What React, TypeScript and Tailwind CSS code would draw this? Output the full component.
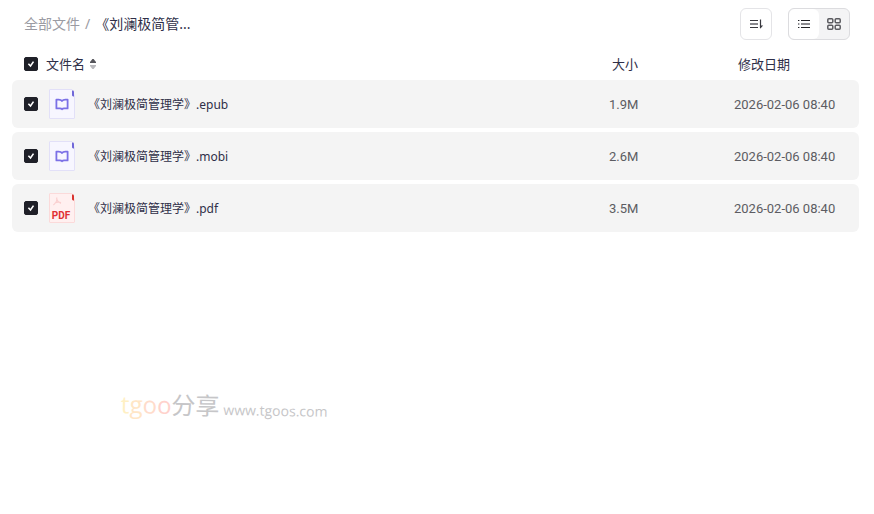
import { useState } from 'react'

type FileKind = 'book' | 'pdf'

interface FileItem {
  name: string
  ext: string
  size: string
  date: string
  kind: FileKind
}

const files: FileItem[] = [
  { name: '《刘澜极简管理学》', ext: '.epub', size: '1.9M', date: '2026-02-06 08:40', kind: 'book' },
  { name: '《刘澜极简管理学》', ext: '.mobi', size: '2.6M', date: '2026-02-06 08:40', kind: 'book' },
  { name: '《刘澜极简管理学》', ext: '.pdf', size: '3.5M', date: '2026-02-06 08:40', kind: 'pdf' },
]

function Checkbox({ label, checked, onChange }: { label: string; checked: boolean; onChange: () => void }) {
  return (
    <span className="relative block size-3.5">
      <input
        type="checkbox"
        aria-label={label}
        checked={checked}
        onChange={onChange}
        className="block size-3.5 appearance-none rounded-xs border border-[#1f2028] checked:bg-[#1f2028]"
      />
      {checked && (
        <svg viewBox="0 0 14 14" className="pointer-events-none absolute inset-0 size-3.5" fill="none" stroke="#fff" strokeWidth="1.6">
          <path d="M4.4 6.8 6.5 9 9.5 4.6" />
        </svg>
      )}
    </span>
  )
}

function BookIcon() {
  return (
    <svg viewBox="0 0 26 30" className="block h-[30px] w-[26px]" fill="none">
      <rect x=".5" y=".5" width="25" height="29" rx=".5" fill="#f7f6ff" stroke="#e2e0f8" />
      <path d="M23 0H26V7Z" fill="#f4f4f4" />
      <path d="M23 1.4H24.4L25 2.4V7.5H24L23 6.4Z" fill="#7067d8" />
      <path
        d="M13 12C12.2 10.8 11.2 10.6 9.6 10.6H7.4V19.4H11C12 19.4 12.6 19.7 13 20.2C13.4 19.7 14 19.4 15 19.4H18.6V10.6H16.4C14.8 10.6 13.8 10.8 13 12Z"
        stroke="#7b70e6"
        strokeWidth="1.8"
        strokeLinejoin="round"
      />
    </svg>
  )
}

function PdfIcon() {
  return (
    <svg viewBox="0 0 26 30" className="block h-[30px] w-[26px]" fill="none">
      <rect x=".5" y=".5" width="25" height="29" rx=".5" fill="#fff0f0" stroke="#fbdada" />
      <path d="M23 0H26V7Z" fill="#f4f4f4" />
      <path d="M23 1.4H24.4L25 2.4V7.5H24L23 6.4Z" fill="#d8332f" />
      <path d="M7.6 4.5C8.4 7 7.6 9.4 4.4 12M7.8 6.5C8.4 8.4 9.6 9.6 12 10.4M5.6 10.2C7.8 9 9.6 8.8 12 9.6" stroke="#fad0d0" strokeWidth="1.2" />
      <text x="12" y="26" textAnchor="middle" fill="#e02f33" fontSize="10" fontWeight="700" fontFamily="Roboto, sans-serif">PDF</text>
    </svg>
  )
}

function App() {
  const [selected, setSelected] = useState<boolean[]>(files.map(() => true))
  const all = selected.every(Boolean)

  const toggle = (index: number) => setSelected(selected.map((v, i) => (i === index ? !v : v)))

  return (
    <div className="min-h-screen bg-white font-['Noto_Sans','Noto_Sans_CJK_SC',sans-serif] text-[#2f2f48]">
      <header className="flex h-12 items-center justify-between px-6">
        <nav className="flex items-center text-sm">
          <a href="#all" className="text-[#9b9ba3]">全部文件</a>
          <span className="px-[5px] text-[#9b9ba3]">/</span>
          <span>《刘澜极简管...</span>
        </nav>
        <div className="flex gap-4">
          <button aria-label="排序" className="flex size-8 items-center justify-center rounded-md border border-[#e4e4e7]">
            <svg viewBox="0 0 16 16" className="size-4" fill="none" strokeWidth="1.2">
              <path d="M2 4.5H10M2 11.5H10" stroke="#39393f" />
              <path d="M2 8H10" stroke="#6a6a70" strokeWidth="1.6" />
              <path d="M12.5 3.5V12" stroke="#39393f" />
              <path d="M12 12.8V9.6H15.2Z" fill="#39393f" />
            </svg>
          </button>
          <div className="flex h-8 overflow-hidden rounded-md border border-[#dcdcdf] bg-[#f4f4f5]">
            <button aria-label="列表" className="flex w-[30px] items-center justify-center rounded-md bg-white">
              <svg viewBox="0 0 16 16" className="size-4" fill="none" strokeWidth="1.2">
                <path d="M2 4.5h1.4M5 4.5h9M2 11.5h1.4M5 11.5h9" stroke="#222226" />
                <path d="M2 8h1.4M5 8h9" stroke="#66666b" strokeWidth="1.6" />
              </svg>
            </button>
            <button aria-label="网格" className="flex w-[30px] items-center justify-center">
              <svg viewBox="0 0 16 16" className="size-4" fill="none" stroke="#5b5b60" strokeWidth="1.5">
                <rect x="1.8" y="2.8" width="5" height="4" rx="1" />
                <rect x="9.2" y="2.8" width="5" height="4" rx="1" />
                <rect x="1.8" y="9.2" width="5" height="4" rx="1" />
                <rect x="9.2" y="9.2" width="5" height="4" rx="1" />
              </svg>
            </button>
          </div>
        </div>
      </header>

      <main className="pr-[15px] pl-3">
        <table className="w-full table-fixed border-separate border-spacing-x-0 border-spacing-y-1">
          <colgroup>
            <col className="w-[34px]" />
            <col />
            <col className="w-[125px]" />
            <col className="w-[125px]" />
          </colgroup>
          <thead>
            <tr className="h-6 text-left text-[13px]">
              <th className="p-0 pl-3">
                <Checkbox label="全选" checked={all} onChange={() => setSelected(files.map(() => !all))} />
              </th>
              <th className="p-0 font-normal">
                <button className="flex items-center gap-1">
                  <span className="pt-0.5">文件名</span>
                  <svg viewBox="0 0 8 12" className="h-3 w-2">
                    <path d="M1 5V4L3.4 1H4.6L7 4V5Z" fill="#55555b" />
                    <path d="M1 7V8L3.4 11H4.6L7 8V7Z" fill="#b9b9bd" />
                  </svg>
                </button>
              </th>
              <th className="p-0 pt-0.5 pl-[3px] font-normal">大小</th>
              <th className="p-0 pt-0.5 pl-1 font-normal">修改日期</th>
            </tr>
          </thead>
          <tbody>
            {files.map((file, i) => (
              <tr key={file.ext} className="h-12 bg-[#f4f4f4]">
                <td className="rounded-l-md p-0 pl-3">
                  <Checkbox label={file.name + file.ext} checked={selected[i]} onChange={() => toggle(i)} />
                </td>
                <td className="p-0 pl-[3px]">
                  <div className="flex items-center gap-[13px] text-xs">
                    {file.kind === 'pdf' ? <PdfIcon /> : <BookIcon />}
                    <span className="pt-0.5">{file.name}{file.ext}</span>
                  </div>
                </td>
                <td className="p-0 pt-0.5 font-['Roboto',sans-serif] text-[13px] text-[#5c5c62]">{file.size}</td>
                <td className="rounded-r-md p-0 pt-0.5 font-['Roboto',sans-serif] text-[13px] whitespace-nowrap text-[#5c5c62]">{file.date}</td>
              </tr>
            ))}
          </tbody>
        </table>
      </main>

      <div className="pointer-events-none mt-[154px] ml-[121px] flex w-max rotate-1 items-baseline gap-1 font-['Open_Sans','Noto_Sans_CJK_SC',sans-serif] text-[#c6c6c8]">
        <span className="text-2xl leading-8">
          <span className="text-[#fff0c4]">t</span>
          <span className="text-[#ffe6c6]">g</span>
          <span className="text-[#ffdccb]">o</span>
          <span className="text-[#ffd2cc]">o</span>
          分享
        </span>
        <span className="text-sm">www.tgoos.com</span>
      </div>
    </div>
  )
}

export default App
